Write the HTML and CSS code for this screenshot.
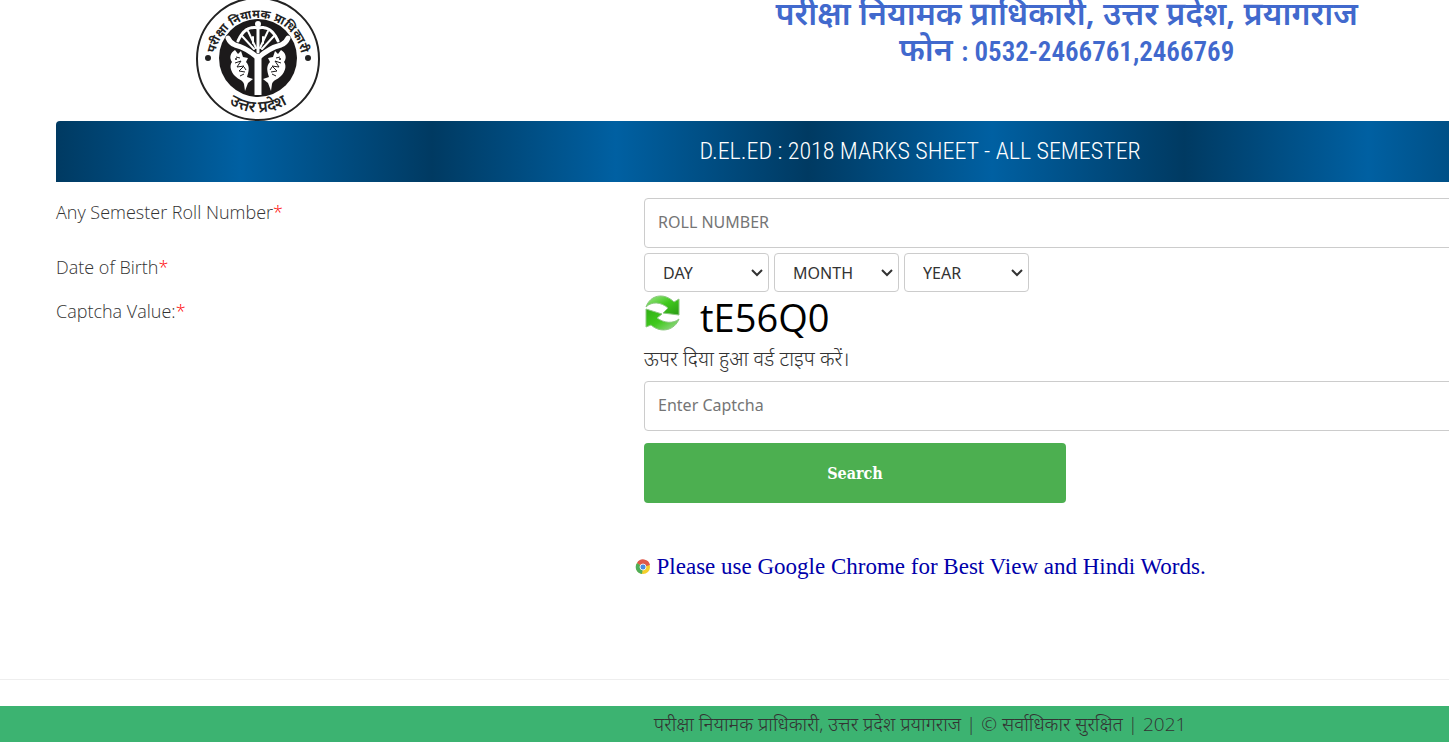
FILE: index.html
```
<!DOCTYPE html>
<html lang="hi">

<head>
  <meta charset="UTF-8">
  <meta name="viewport" content="width=device-width, initial-scale=1">
  <title>D.El.Ed : 2018 Marks Sheet</title>
  <link rel="stylesheet" href="styles.css">
</head>

<body>
  <div class="page">
    <div class="container">
      <header class="header">
        <div class="header-logo">
          <svg class="logo" viewBox="0 0 124 124" role="img" aria-label="परीक्षा नियामक प्राधिकारी">
            <defs>
              <path id="arc-top" d="M18 65 A44 44 0 1 1 106 65" />
              <path id="arc-bottom" d="M14 86 A54 54 0 0 0 110 86" />
            </defs>
            <circle cx="62" cy="62" r="61" fill="#fff" stroke="#222" stroke-width="2" />
            <circle cx="62" cy="61" r="39" fill="#1c1a1b" />
            <circle cx="12" cy="61" r="3" fill="#222" />
            <circle cx="112" cy="61" r="3" fill="#222" />
            <text class="logo-text"><textPath href="#arc-top" startOffset="50%">परीक्षा नियामक प्राधिकारी</textPath></text>
            <text class="logo-text logo-text-bottom"><textPath href="#arc-bottom" startOffset="50%">उत्तर प्रदेश</textPath></text>
            <!-- bow, arrow and the meeting rivers -->
            <g fill="none" stroke="#fff" stroke-linecap="round" stroke-linejoin="round">
              <path d="M62 57 V98" stroke-width="7" stroke-linecap="butt" />
              <path d="M62 61 Q51 51 39 48 Q34 46 32 41 M62 61 Q73 51 85 48 Q90 46 92 41" stroke-width="5" />
              <path d="M62 55 V29" stroke-width="3" />
              <path d="M42 44 Q49 28 62 31 Q75 28 82 44" stroke-width="3" stroke-dasharray="3 1" />
              <path d="M46 39 L58 52 M52 34 L60 51 M78 39 L66 52 M72 34 L64 51" stroke-width="2" />
              <path d="M57 40 V46 M67 40 V46" stroke-width="2" />
            </g>
            <circle cx="62" cy="27" r="3" fill="#fff" />
            <!-- fish -->
            <g id="fish">
              <path d="M39 53 C34 56 33 61 36 65 C33 69 35 75 39 79 C43 83 47 83 48 87 L49 94 L52 86 L57 82 L51 80 C53 74 54 69 50 65 L52 61 L47 60 L45 54 L42 57 Z" fill="#fff" />
              <path d="M40 60 l4 1 M39 66 l6 -2 l-4 6 l7 -1 l-5 5 l6 1 M44 79 l4 -2 M48 70 l2 3" fill="none" stroke="#1c1a1b" stroke-width="1" />
              <circle cx="40" cy="62" r="1" fill="#1c1a1b" />
            </g>
            <use href="#fish" transform="matrix(-1 0 0 1 124 0)" />
          </svg>
        </div>
        <h1 class="header-title">
          परीक्षा नियामक प्राधिकारी, उत्तर प्रदेश, प्रयागराज<br>
          फोन <span class="phone">: 0532-2466761,2466769</span>
        </h1>
      </header>

      <h2 class="banner">D.EL.ED : 2018 MARKS SHEET - ALL SEMESTER</h2>

      <form class="form">
        <div class="row row-roll">
          <label for="roll">Any Semester Roll Number<span class="required">*</span></label>
          <div class="field">
            <input type="text" id="roll" name="roll" placeholder="ROLL NUMBER">
          </div>
        </div>
        <div class="row row-dob">
          <label for="day">Date of Birth<span class="required">*</span></label>
          <div class="field dob">
            <select id="day" name="day" aria-label="Day"><option>DAY</option></select>
            <select id="month" name="month" aria-label="Month"><option>MONTH</option></select>
            <select id="year" name="year" aria-label="Year"><option>YEAR</option></select>
          </div>
        </div>
        <div class="row">
          <label for="captcha">Captcha Value:<span class="required">*</span></label>
          <div class="field">
            <div class="captcha">
              <button type="button" class="refresh" aria-label="Refresh captcha">
                <svg viewBox="0 0 36 36" width="36" height="36">
                  <defs>
                    <linearGradient id="green" x1="0" y1="0" x2="1" y2="1">
                      <stop offset="0" stop-color="#a4e690" />
                      <stop offset="0.500" stop-color="#3fc91c" />
                      <stop offset="1" stop-color="#2b9a15" />
                    </linearGradient>
                    <linearGradient id="green-low" x1="0" y1="0" x2="1" y2="1">
                      <stop offset="0" stop-color="#2fae14" />
                      <stop offset="0.500" stop-color="#3fc91c" />
                      <stop offset="1" stop-color="#a4d99a" />
                    </linearGradient>
                  </defs>
                  <path d="M2 12 C6 0 20 -3 30 7 L35 4 V20 L19 18 L24 13 C17 7 8 6 2 12 Z" fill="url(#green)" stroke="#8cc880" />
                  <path d="M35 24 C31 35 17 39 7 30 L2 32 V14 L18 19 L13 23 C20 28 29 29 35 24 Z" fill="url(#green-low)" stroke="#8cc880" />
                </svg>
              </button>
              <span class="captcha-code">tE56Q0</span>
            </div>
            <p class="hint">ऊपर दिया हुआ वर्ड टाइप करें।</p>
            <input type="text" id="captcha" name="captcha" placeholder="Enter Captcha">
            <button type="submit" class="search">Search</button>
          </div>
        </div>
      </form>

      <p class="note">
        <svg viewBox="0 0 16 16" width="16" height="16" aria-hidden="true">
          <circle cx="8" cy="8" r="7" fill="#f4cf2b" />
          <path d="M8 8 L2 4 A7 7 0 0 1 15 6 Z" fill="#e0584a" />
          <path d="M8 8 L2 4 A7 7 0 0 0 7 15 Z" fill="#4fae58" />
          <circle cx="8" cy="8" r="3" fill="#4a8be0" stroke="#e8eef5" />
        </svg>
        Please use Google Chrome for Best View and Hindi Words.
      </p>
    </div>
    <hr>
    <footer class="footer">परीक्षा नियामक प्राधिकारी, उत्तर प्रदेश प्रयागराज | © सर्वाधिकार सुरक्षित | 2021</footer>
  </div>
</body>

</html>
```

FILE: styles.css
```
* {
  box-sizing: border-box;
}

html {
  overflow: hidden;
}

body {
  margin: 0;
  background-color: #fff;
  color: #333;
  font-family: "Open Sans", "Noto Sans", sans-serif;
  font-size: 18px;
  font-weight: 350;
  line-height: 24px;
}

/* the sheet is wider than the window and runs off its right edge */
.page {
  width: 127vw;
}

.container {
  padding: 0 56px;
}

.header {
  display: grid;
  grid-template-columns: 3fr 8fr 1fr;
  margin: -5px -15px 0;
}

.header-logo {
  display: flex;
  justify-content: center;
  padding-top: 2px;
  padding-right: 6px;
}

.logo {
  display: block;
  width: 124px;
  height: 124px;
}

.logo-text {
  font-family: "Noto Sans", sans-serif;
  font-size: 12px;
  font-weight: bold;
  fill: #222;
  text-anchor: middle;
}

.logo-text-bottom {
  font-size: 16px;
  font-weight: 600;
}

.header-title {
  margin: 0;
  color: #4169cd;
  font-family: "Noto Sans", sans-serif;
  font-size: 32px;
  font-weight: 600;
  line-height: 36px;
  text-align: center;
}

.phone {
  font-family: "Roboto Condensed", Roboto, sans-serif;
  font-size: 27px;
}

.banner {
  margin: 0;
  border-radius: 4px 4px 0 0;
  background: repeating-linear-gradient(90deg, #003a62 0, #0060a2 184px, #003a62 376px);
  color: #fff;
  font-family: "Roboto Condensed", Roboto, sans-serif;
  font-size: 24px;
  font-weight: 300;
  line-height: 61px;
  text-align: center;
}

.form {
  padding-top: 16px;
}

.row {
  display: grid;
  grid-template-columns: 1fr 2fr;
}

.row-roll,
.row-dob {
  margin-bottom: 5px;
}

.row label {
  padding-top: 2px;
}

.field {
  padding-left: 12px;
}

.required {
  color: #f00;
}

input,
select {
  border: 1px solid #ccc;
  border-radius: 4px;
  background-color: #fff;
  color: #333;
  font-family: "Noto Sans", sans-serif;
  font-size: 16px;
}

input {
  display: block;
  width: 100%;
  height: 50px;
  padding: 11px 13px 13px;
}

input::placeholder {
  color: #757575;
}

.dob {
  display: flex;
  gap: 5px;
}

select {
  width: 125px;
  height: 39px;
  padding: 0 18px;
  appearance: none;
  background: #fff url("data:image/svg+xml,%3Csvg xmlns='http://www.w3.org/2000/svg' width='12' height='8' viewBox='0 0 12 8'%3E%3Cpath d='M1 1 L6 6 L11 1' fill='none' stroke='%23333' stroke-width='2'/%3E%3C/svg%3E") no-repeat right 5px center;
}

.captcha {
  display: flex;
  gap: 20px;
  height: 48px;
  margin-top: -2px;
}

.refresh {
  width: 36px;
  height: 36px;
  padding: 0;
  border: 0;
  background: none;
  cursor: pointer;
}

.captcha-code {
  color: #000;
  font-size: 38px;
  font-weight: 400;
  line-height: 44px;
}

.hint {
  margin: 4px 0 10px;
  font-size: 20px;
}

.search {
  width: 37%;
  height: 60px;
  margin-top: 12px;
  border: 0;
  border-radius: 4px;
  background-color: #4caf50;
  color: #fff;
  font-family: "DejaVu Serif Condensed", "DejaVu Serif", serif;
  font-size: 16px;
  font-weight: bold;
  cursor: pointer;
}

.note {
  display: flex;
  align-items: center;
  justify-content: center;
  gap: 6px;
  margin: 48px 0 96px;
  color: #00a;
  font-family: "Liberation Serif", serif;
  font-size: 23px;
  font-weight: normal;
  line-height: 32px;
}

hr {
  margin: 0 0 26px;
  border: 0;
  border-top: 1px solid #eee;
}

.footer {
  background-color: #3cb371;
  font-size: 19px;
  line-height: 36px;
  text-align: center;
}
```
